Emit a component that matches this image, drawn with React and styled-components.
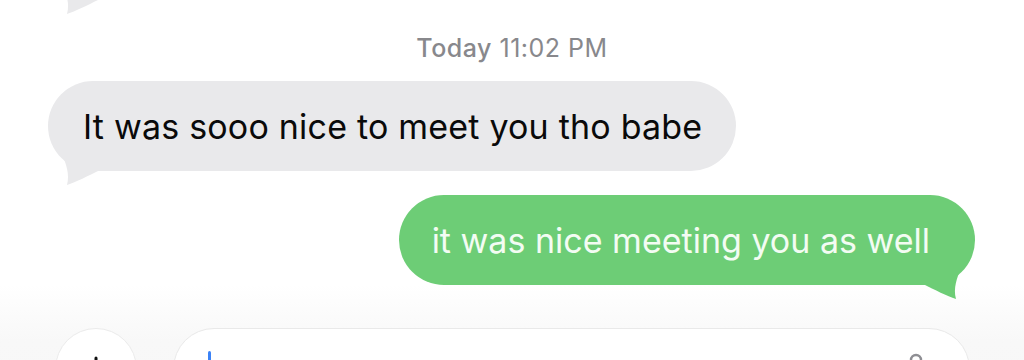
import React from "react";
import styled, { createGlobalStyle } from "styled-components";

const GlobalStyle = createGlobalStyle`
  html, body {
    margin: 0;
    padding: 0;
    background: #ffffff;
  }
  body {
    font-family: Inter, "Noto Sans", "Liberation Sans", sans-serif;
    -webkit-font-smoothing: antialiased;
  }
`;

const Screen = styled.div`
  width: 1024px;
  height: 360px;
  overflow: hidden;
  display: flex;
  flex-direction: column;
  background: #ffffff;
`;

const PrevTail = styled.svg`
  display: block;
  margin-left: 48px;
  width: 52px;
  height: 14px;
  flex-shrink: 0;
`;

const Timestamp = styled.div`
  margin-top: 19px;
  text-align: center;
  font-size: 25px;
  line-height: 30px;
  color: #88888c;
  letter-spacing: 0.5px;

  b {
    font-weight: 500;
  }
`;

const Row = styled.div`
  display: flex;
  justify-content: ${(p) => (p.$mine ? "flex-end" : "flex-start")};
  padding: 0 49px 0 48px;
  margin-top: ${(p) => (p.$first ? "18px" : "24px")};
  flex-shrink: 0;
`;

const Bubble = styled.div`
  position: relative;
  height: 90px;
  display: flex;
  align-items: center;
  padding: ${(p) => (p.$mine ? "0 45px 0 33px" : "0 34px 0 35px")};
  border-radius: 45px;
  background: ${(p) => (p.$mine ? "#6dcd76" : "#e9e9eb")};
  color: ${(p) => (p.$mine ? "#f3fcf3" : "#0a0a0a")};
  font-size: 34px;
  letter-spacing: ${(p) => (p.$mine ? "0" : "0.2px")};
  white-space: nowrap;
`;

const Tail = styled.svg`
  position: absolute;
  bottom: -15px;
  width: 52px;
  height: 40px;
  ${(p) => (p.$mine ? "right: 0; transform: scaleX(-1);" : "left: 0;")}
`;

const Composer = styled.div`
  flex: 1;
  display: flex;
  align-items: flex-start;
  gap: 36px;
  padding: 43px 54px 0 55px;
  background: linear-gradient(
    to bottom,
    rgba(255, 255, 255, 0) 0%,
    #f8f8f8 45%,
    #f7f7f7 100%
  );
`;

const RoundButton = styled.div`
  width: 82px;
  height: 82px;
  flex-shrink: 0;
  border-radius: 50%;
  background: #ffffff;
  border: 1px solid #ebebeb;
  box-sizing: border-box;
  display: flex;
  align-items: center;
  justify-content: center;
`;

const InputField = styled.div`
  flex: 1;
  height: 82px;
  border-radius: 41px;
  background: #ffffff;
  border: 1px solid #e9e9e9;
  box-sizing: border-box;
  display: flex;
  align-items: center;
  padding: 0 42px 0 34px;
`;

const Caret = styled.div`
  width: 3px;
  height: 36px;
  border-radius: 2px;
  background: #3b82f6;
`;

const Spacer = styled.div`
  flex: 1;
`;

const tailPath =
  "M14 8 C18 18 22 28 19 39 C28 36 40 30 52 24 L52 8 Z";

export default function App() {
  return (
    <>
      <GlobalStyle />
      <Screen>
        <PrevTail viewBox="0 25 52 14">
          <path d={tailPath} fill="#e9e9eb" />
        </PrevTail>
        <Timestamp>
          <b>Today</b> 11:02 PM
        </Timestamp>
        <Row $first>
          <Bubble>
            It was sooo nice to meet you tho babe
            <Tail viewBox="0 0 52 40">
              <path d={tailPath} fill="#e9e9eb" />
            </Tail>
          </Bubble>
        </Row>
        <Row $mine>
          <Bubble $mine>
            it was nice meeting you as well
            <Tail $mine viewBox="0 0 52 40">
              <path d={tailPath} fill="#6dcd76" />
            </Tail>
          </Bubble>
        </Row>
        <Composer>
          <RoundButton>
            <svg width="26" height="26" viewBox="0 0 26 26">
              <path
                d="M13 2 V24 M2 13 H24"
                stroke="#111"
                strokeWidth="3"
                strokeLinecap="round"
              />
            </svg>
          </RoundButton>
          <InputField>
            <Caret />
            <Spacer />
            <svg width="22" height="32" viewBox="0 0 22 32">
              <rect
                x="6"
                y="2"
                width="10"
                height="18"
                rx="5"
                fill="none"
                stroke="#8e8e93"
                strokeWidth="2.4"
              />
              <path
                d="M2 15 A9 9 0 0 0 20 15 M11 24 V30"
                fill="none"
                stroke="#8e8e93"
                strokeWidth="2.4"
                strokeLinecap="round"
              />
            </svg>
          </InputField>
        </Composer>
      </Screen>
    </>
  );
}
